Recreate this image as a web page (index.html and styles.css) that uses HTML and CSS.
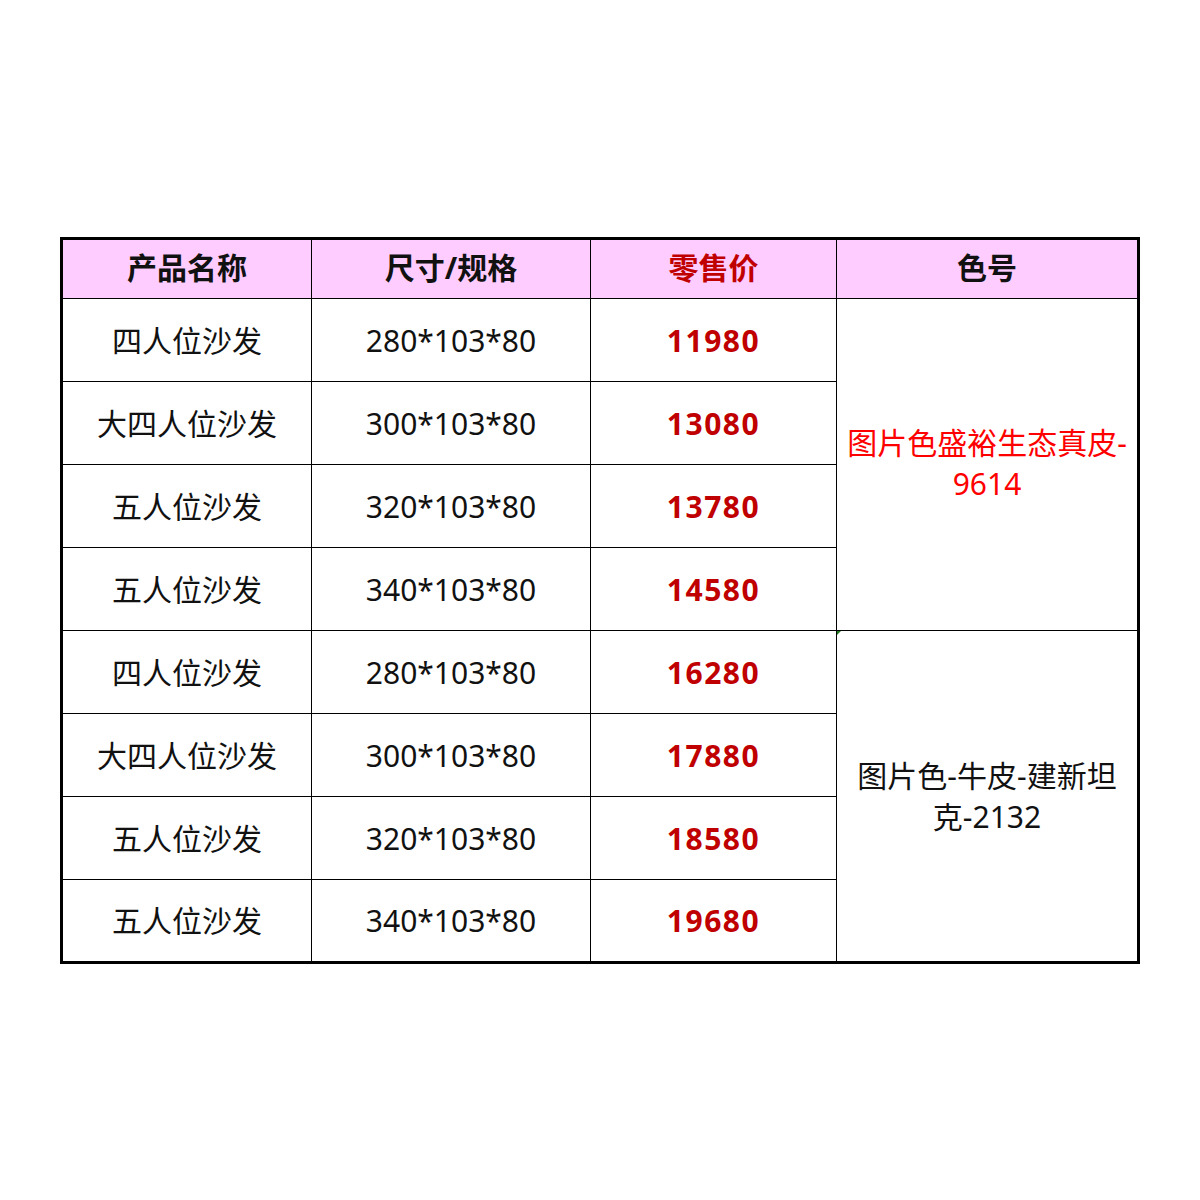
FILE: index.html
```html
<!DOCTYPE html>
<html lang="zh">
<head>
<meta charset="utf-8">
<link rel="stylesheet" href="styles.css">
</head>
<body>
<table class="price-table">
  <colgroup>
    <col class="c1"><col class="c2"><col class="c3"><col class="c4">
  </colgroup>
  <thead>
    <tr class="head">
      <th>产品名称</th>
      <th>尺寸/规格</th>
      <th class="red-head">零售价</th>
      <th>色号</th>
    </tr>
  </thead>
  <tbody>
    <tr><td>四人位沙发</td><td>280*103*80</td><td class="price">11980</td>
      <td rowspan="4" class="color red">图片色盛裕生态真皮-<br>9614</td></tr>
    <tr><td>大四人位沙发</td><td>300*103*80</td><td class="price">13080</td></tr>
    <tr><td>五人位沙发</td><td>320*103*80</td><td class="price">13780</td></tr>
    <tr><td>五人位沙发</td><td>340*103*80</td><td class="price">14580</td></tr>
    <tr><td>四人位沙发</td><td>280*103*80</td><td class="price">16280</td>
      <td rowspan="4" class="color mark">图片色-牛皮-建新坦<br>克-2132</td></tr>
    <tr><td>大四人位沙发</td><td>300*103*80</td><td class="price">17880</td></tr>
    <tr><td>五人位沙发</td><td>320*103*80</td><td class="price">18580</td></tr>
    <tr class="last"><td>五人位沙发</td><td>340*103*80</td><td class="price">19680</td></tr>
  </tbody>
</table>
</body>
</html>
```
FILE: styles.css
```css
html, body {
  margin: 0;
  padding: 0;
  background: #ffffff;
}
body {
  padding: 237px 0 0 60px;
  font-family: "Noto Sans", "Noto Sans CJK SC", sans-serif;
  color: #111111;
}
.price-table {
  border-collapse: collapse;
  table-layout: fixed;
  width: 1077px;
  border: 3px solid #000000;
}
.c1 { width: 250px; }
.c2 { width: 279px; }
.c3 { width: 246px; }
.c4 { width: 302px; }
th, td {
  border: 1px solid #000000;
  text-align: center;
  vertical-align: middle;
  padding: 0;
  font-size: 30px;
  line-height: 41px;
}
.head th {
  background: #ffccff;
  height: 55px;
  padding-bottom: 3px;
  font-weight: 700;
  color: #111111;
}
.head th.red-head {
  color: #c00000;
}
tbody td {
  height: 82px;
}
tbody tr.last td {
  height: 81px;
}
td.price {
  color: #c00000;
  font-weight: 700;
  letter-spacing: 1.5px;
}
td.red {
  color: #ff0000;
  padding-bottom: 3px;
}
td.color {
  position: relative;
}
td.mark::before {
  content: "";
  position: absolute;
  left: 0;
  top: 0;
  width: 0;
  height: 0;
  border-top: 4px solid #1e7b1e;
  border-right: 4px solid transparent;
}
```
